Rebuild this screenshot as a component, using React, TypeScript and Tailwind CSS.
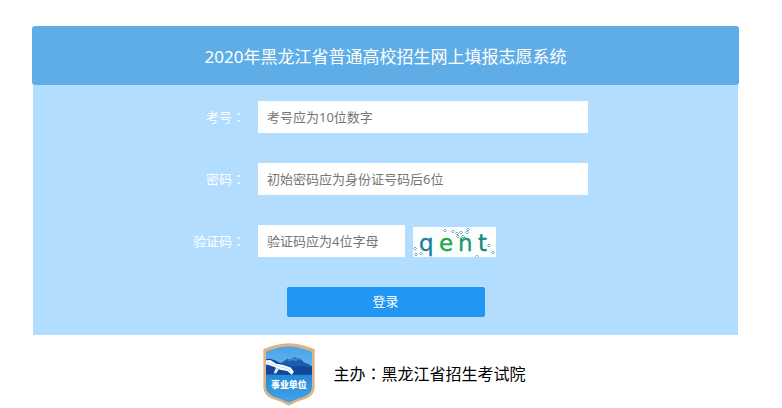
import { useState } from "react";

interface LoginForm {
  examNo: string;
  password: string;
  code: string;
}

const labelClass = "w-[62px] shrink-0 text-right text-[13px] text-white";
const inputClass =
  "h-8 bg-white px-[9px] text-[13px] text-gray-700 placeholder-[#757575] outline-none";

const captchaLetters = [
  { char: "q", x: 6, color: "#187f96" },
  { char: "e", x: 26, color: "#1fa63c" },
  { char: "n", x: 45, color: "#1c9a62" },
  { char: "t", x: 65, color: "#128a72" },
];

const captchaDots = [
  [31, 3], [39, 4], [43, 6], [47, 5], [54, 2], [53, 5], [49, 9], [44, 9],
  [51, 11], [54, 12], [1, 21], [2, 27], [7, 26], [75, 18], [79, 25], [63, 29],
];

// full width colon, centred in its box
const Colon = () => <span className="font-['Noto_Sans_CJK_TC',sans-serif]">：</span>;

const Captcha = () => (
  <svg className="h-[30px] w-[83px]" viewBox="0 0 83 30" role="img" aria-label="验证码">
    <rect width="83" height="30" fill="#fbfeff" />
    {captchaLetters.map((l) => (
      <text
        key={l.char}
        x={l.x}
        y="24"
        fill={l.color}
        stroke={l.color}
        strokeWidth="0.3"
        fontSize="23"
        fontFamily="'DejaVu Sans', Verdana, sans-serif"
      >
        {l.char}
      </text>
    ))}
    {captchaDots.map(([x, y]) => (
      <path
        key={`${x}-${y}`}
        d={`M${x + 1} ${y - 1}l1.5 1.5l-1.5 1.5l-1.5 -1.5z`}
        fill="none"
        stroke="#3d9093"
        strokeWidth="0.7"
      />
    ))}
  </svg>
);

const Emblem = () => (
  <svg className="h-[63px] w-[52px]" viewBox="40 24 157 189" role="img" aria-label="事业单位">
    <defs>
      <linearGradient id="sky" x1="0" y1="0" x2="0" y2="1">
        <stop offset="0" stopColor="#46a0e6" />
        <stop offset="1" stopColor="#6bbaf0" />
      </linearGradient>
      <linearGradient id="base" x1="0" y1="0" x2="0" y2="1">
        <stop offset="0" stopColor="#2388d6" />
        <stop offset="1" stopColor="#46a8ea" />
      </linearGradient>
      <clipPath id="shield">
        <path d="M118 33Q83 35 49 50V157Q50 174 69 184Q96 192 118 204Q140 192 168 184Q187 174 188 157V50Q153 35 118 33Z" />
      </clipPath>
    </defs>
    <path
      d="M118 24Q78 26 41 42V158Q42 181 66 191Q96 200 118 213Q140 200 171 191Q195 181 196 158V42Q158 26 118 24Z"
      fill="#dbb384"
    />
    <g clipPath="url(#shield)">
      <rect x="40" y="24" width="157" height="95" fill="url(#sky)" />
      <rect x="40" y="119" width="157" height="94" fill="url(#base)" />
      <path
        d="M84 88L101 79L114 71L124 73L136 65L143 70L151 69L164 82L176 86L190 95V119H84Z"
        fill="#1b5dae"
      />
      <path d="M40 72L62 71L80 77L98 88L130 94L160 92L197 97V119H40Z" fill="#12479a" />
      <path d="M114 71L124 73L136 65L143 70L151 69L157 76L146 74L139 79L129 75L119 80Z" fill="#3c7fca" />
      <path d="M40 76L62 75L80 86L101 90L124 97L133 110L127 119L113 108L92 104L73 95L55 89L40 87Z" fill="#fff" />
      <path d="M51 82L72 88L93 96L112 100L124 110" fill="none" stroke="#9fc2e6" strokeWidth="2" />
      <path d="M79 98L88 103L80 115H72Z" fill="#dcecfa" />
    </g>
    <text
      x="118"
      y="160"
      textAnchor="middle"
      fill="#fff"
      fontSize="27"
      fontWeight="900"
      fontFamily="'Noto Sans CJK SC', sans-serif"
    >
      事业单位
    </text>
  </svg>
);

const App = () => {
  const [formData, setFormData] = useState<LoginForm>({
    examNo: "",
    password: "",
    code: "",
  });

  const handleSubmit = (e: React.FormEvent) => {
    e.preventDefault();
  };

  return (
    <div className="min-h-screen bg-white pt-[26px] pr-[43px] pl-8 font-['Noto_Sans','Noto_Sans_CJK_SC',sans-serif]">
      <h1 className="rounded-[3px] bg-[#5fade6] pt-[17px] pb-[15px] text-center text-[17px] leading-[27px] font-normal text-white">
        2020年黑龙江省普通高校招生网上填报志愿系统
      </h1>

      <form
        onSubmit={handleSubmit}
        className="mx-px flex flex-col items-center gap-[30px] bg-[#b2ddff] pt-4 pb-[18px]"
      >
        <div className="flex w-[405px] items-center gap-[13px]">
          <label htmlFor="examNo" className={labelClass}>
            考号
            <Colon />
          </label>
          <input
            type="text"
            id="examNo"
            value={formData.examNo}
            onChange={(e) => setFormData({ ...formData, examNo: e.target.value })}
            placeholder="考号应为10位数字"
            className={`${inputClass} min-w-0 flex-1`}
          />
        </div>

        <div className="flex w-[405px] items-center gap-[13px]">
          <label htmlFor="password" className={labelClass}>
            密码
            <Colon />
          </label>
          <input
            type="password"
            id="password"
            value={formData.password}
            onChange={(e) => setFormData({ ...formData, password: e.target.value })}
            placeholder="初始密码应为身份证号码后6位"
            className={`${inputClass} min-w-0 flex-1`}
          />
        </div>

        <div className="flex w-[405px] items-center gap-[13px]">
          <label htmlFor="code" className={labelClass}>
            验证码
            <Colon />
          </label>
          <div className="flex items-end gap-2">
            <input
              type="text"
              id="code"
              value={formData.code}
              onChange={(e) => setFormData({ ...formData, code: e.target.value })}
              placeholder="验证码应为4位字母"
              className={`${inputClass} w-[147px]`}
            />
            <Captcha />
          </div>
        </div>

        <button
          type="submit"
          className="h-[30px] w-[198px] rounded-[2px] bg-[#2196f3] text-[13px] text-white"
        >
          登录
        </button>
      </form>

      <footer className="flex items-center justify-center gap-[18px] pt-2 pl-[18px]">
        <Emblem />
        <p className="pb-[3px] text-base text-black">
          主办
          <Colon />
          黑龙江省招生考试院
        </p>
      </footer>
    </div>
  );
};

export default App;
